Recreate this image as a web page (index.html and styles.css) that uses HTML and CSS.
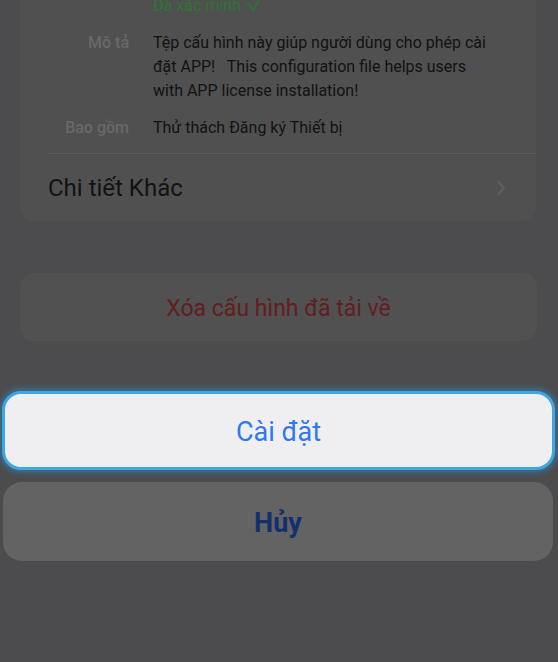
FILE: index.html
```html
<!DOCTYPE html>
<html lang="vi">
<head>
<meta charset="utf-8">
<title>Cài đặt cấu hình</title>
<link rel="stylesheet" href="styles.css">
</head>
<body>
<div class="card">
  <div class="row verified-row">
    <span class="label"></span>
    <span class="value verified">Đã xác minh <svg class="check" viewBox="0 0 14 12" width="14" height="12"><polyline points="1.5,3 7,10 12.5,1.5" fill="none" stroke="currentColor" stroke-width="2" stroke-linecap="round" stroke-linejoin="round"/></svg></span>
  </div>
  <div class="row desc-row">
    <span class="label">Mô tả</span>
    <span class="value">Tệp cấu hình này giúp người dùng cho phép cài đặt APP!&nbsp;&nbsp; This configuration file helps users with APP license installation!</span>
  </div>
  <div class="row incl-row">
    <span class="label">Bao gồm</span>
    <span class="value">Thử thách Đăng ký Thiết bị</span>
  </div>
  <div class="more">
    <span>Chi tiết Khác</span>
    <svg class="chev" viewBox="0 0 10 16" width="10" height="16"><polyline points="2,1.5 8,8 2,14.5" fill="none" stroke="currentColor" stroke-width="2" stroke-linecap="round" stroke-linejoin="round"/></svg>
  </div>
</div>
<div class="delete">Xóa cấu hình đã tải về</div>
<div class="btn install">Cài đặt</div>
<div class="btn cancel">Hủy</div>
</body>
</html>
```
FILE: styles.css
```css
html, body {
  margin: 0;
  padding: 0;
  background: #4c4c4e;
  height: 100%;
  overflow: hidden;
}
body {
  display: flex;
  flex-direction: column;
  font-family: Roboto, "Liberation Sans", sans-serif;
}
.card {
  margin: -6px 22px 0 20px;
  background: #505050;
  border-radius: 0 0 14px 14px;
  padding: 0 0 0 28px;
}
.row {
  display: grid;
  grid-template-columns: 81px 1fr;
  column-gap: 24px;
  font-size: 16px;
  line-height: 24px;
  padding-right: 43px;
}
.label {
  text-align: right;
  color: #686869;
  font-weight: 500;
}
.value {
  color: #121212;
}
.verified {
  color: #2e7533;
  display: flex;
  align-items: center;
  gap: 5px;
}
.check { display: block; }
.desc-row { margin-top: 13px; }
.incl-row {
  margin-top: 13px;
  padding-bottom: 13px;
  border-bottom: 1px solid #5c5c5d;
  padding-right: 24px;
}
.more {
  height: 67px;
  display: flex;
  align-items: center;
  justify-content: space-between;
  padding-right: 30px;
  font-size: 24px;
  color: #121212;
}
.chev { color: #5f5f60; display: block; }
.delete {
  margin: 52px 21px 0 20px;
  height: 68px;
  box-sizing: border-box;
  padding-top: 2px;
  border-radius: 14px;
  background: #515151;
  color: #621e1e;
  font-size: 23px;
  display: flex;
  align-items: center;
  justify-content: center;
}
.btn {
  height: 79px;
  box-sizing: border-box;
  border-radius: 19px;
  display: flex;
  align-items: center;
  justify-content: center;
  font-size: 27px;
}
.install {
  margin: 50px 3px 0 2px;
  padding-top: 3px;
  background: #efeff1;
  border: 3px solid #3fa7de;
  box-shadow: 0 0 6px 2px rgba(40, 150, 230, 0.55);
  color: #2f78ee;
}
.cancel {
  margin: 12px 5px 0 3px;
  padding-top: 2px;
  background: #636363;
  color: #14306c;
  font-weight: 700;
}
```
